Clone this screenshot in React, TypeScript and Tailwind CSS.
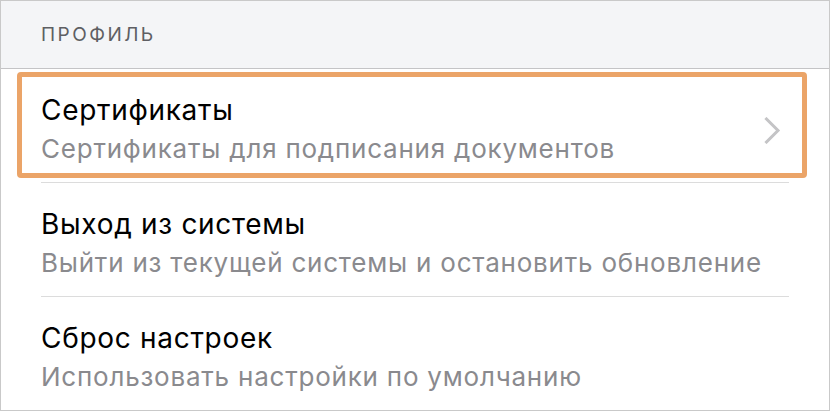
type Item = { title: string; subtitle: string; chevron?: boolean; highlighted?: boolean };

const items: Item[] = [
  { title: 'Сертификаты', subtitle: 'Сертификаты для подписания документов', chevron: true, highlighted: true },
  { title: 'Выход из системы', subtitle: 'Выйти из текущей системы и остановить обновление' },
  { title: 'Сброс настроек', subtitle: 'Использовать настройки по умолчанию' },
];

function Chevron() {
  return (
    <svg width="17" height="27" viewBox="0 0 17 27" fill="none" className="mr-[8px] shrink-0">
      <path d="M2.5 2 L14 13.5 L2.5 25" stroke="#c4c4c6" strokeWidth="3" strokeLinecap="square" />
    </svg>
  );
}

function SettingsRow({ item, last }: { item: Item; last: boolean }) {
  return (
    <div className="relative">
      <div className="flex items-center px-[40px] pt-[21px] pb-[12px]">
        <div className="flex-1 min-w-0">
          <div className="text-[28px] leading-[40px] tracking-[0.025em] text-black whitespace-nowrap">{item.title}</div>
          <div className="text-[26px] leading-[40px] tracking-[0.03em] text-[#8a8a8e] whitespace-nowrap -translate-y-[1px]">{item.subtitle}</div>
        </div>
        {item.chevron && <Chevron />}
      </div>
      {!last && <div className="mx-[40px] h-px bg-[#dcdcdc]" />}

      {/* highlight frame drawn over the row */}
      {item.highlighted && (
        <div className="absolute left-[16px] right-[22px] top-[3px] h-[106px] rounded-[4px] border-[5px] border-[#eba468] pointer-events-none" />
      )}
    </div>
  );
}

export default function App() {
  return (
    <div
      className="w-[830px] h-[411px] bg-white border border-[#c9c9c9] overflow-hidden flex flex-col"
      style={{ fontFamily: 'Inter, "Noto Sans", sans-serif' }}
    >
      <div className="h-[68px] shrink-0 bg-[#f4f5f7] border-b border-[#c4c4c6] flex items-center px-[40px]">
        <span className="text-[19px] tracking-[0.13em] text-[#5e5f63] translate-y-[1px]">ПРОФИЛЬ</span>
      </div>
      <div className="flex-1">
        {items.map((item, i) => (
          <SettingsRow key={item.title} item={item} last={i === items.length - 1} />
        ))}
      </div>
    </div>
  );
}
